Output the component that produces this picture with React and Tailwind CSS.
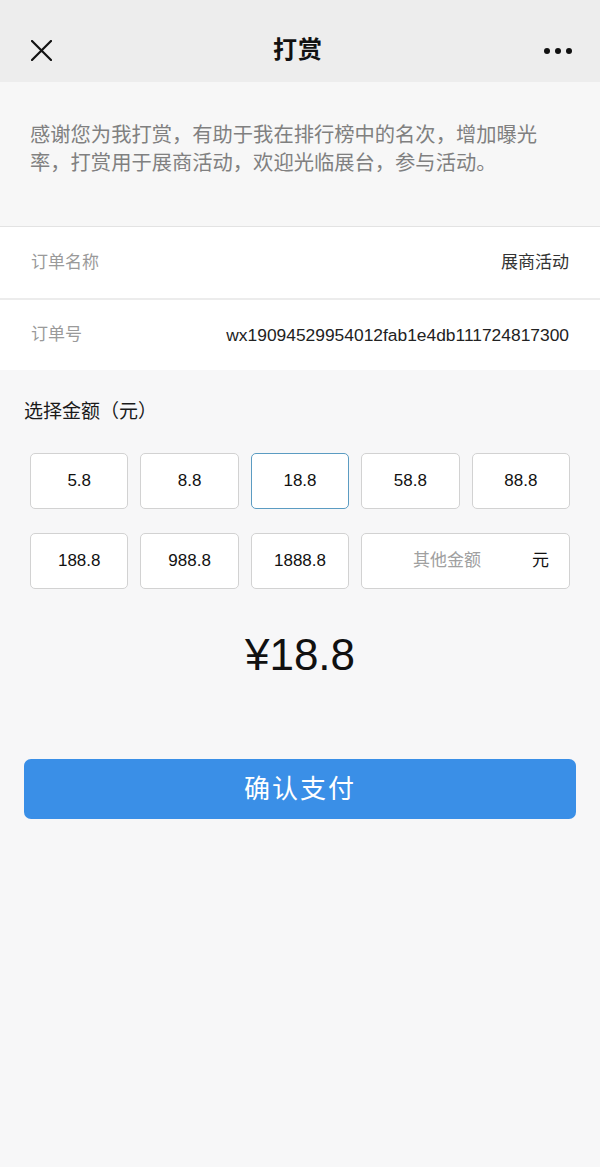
import React from "react";

const amounts1 = ["5.8", "8.8", "18.8", "58.8", "88.8"];
const amounts2 = ["188.8", "988.8", "1888.8"];

function AmountBox({ value, selected }) {
  return (
    <div
      className={`h-[56px] flex items-center justify-center rounded-[5px] bg-white text-[17px] text-[#111] border ${
        selected ? "border-[#5b9cc2]" : "border-[#d2d2d2]"
      }`}
    >
      {value}
    </div>
  );
}

export default function App() {
  return (
    <div
      className="w-[600px] min-h-[1167px] bg-[#f7f7f8] flex flex-col"
      style={{ fontFamily: '"Liberation Sans", "Noto Sans CJK SC", sans-serif' }}
    >
      {/* Header */}
      <div className="h-[82px] bg-[#ededed] flex items-center justify-between px-[31px] pt-[18px] shrink-0">
        <svg width="21" height="21" viewBox="0 0 21 21" className="mt-[1px]">
          <path d="M1 1 L20 20 M20 1 L1 20" stroke="#111" strokeWidth="2.2" strokeLinecap="round" />
        </svg>
        <div className="text-[24px] font-bold text-[#111] tracking-[1px]">打赏</div>
        <div className="flex items-center gap-[5px] -mr-[3px] mt-[2px]">
          <span className="w-[6px] h-[6px] rounded-full bg-[#111]" />
          <span className="w-[6px] h-[6px] rounded-full bg-[#111]" />
          <span className="w-[6px] h-[6px] rounded-full bg-[#111]" />
        </div>
      </div>

      {/* Description */}
      <div className="h-[144px] bg-[#f7f7f7] pl-[30px] pt-[39px] shrink-0">
        <p className="w-[520px] text-[20.3px] leading-[28px] text-[#808080]">
          感谢您为我打赏，有助于我在排行榜中的名次，增加曝光率，打赏用于展商活动，欢迎光临展台，参与活动。
        </p>
      </div>

      {/* Order info */}
      <div className="border-t border-[#e3e3e3] bg-white">
        <div className="h-[71px] flex items-center justify-between px-[31px] text-[17px]">
          <span className="text-[#9a9a9a]">订单名称</span>
          <span className="text-[#333]">展商活动</span>
        </div>
        <div className="h-[2px] bg-[#ececec]" />
        <div className="h-[70px] flex items-center justify-between px-[31px] text-[17px]">
          <span className="text-[#9a9a9a]">订单号</span>
          <span className="text-[#222] text-[17.4px]">wx19094529954012fab1e4db111724817300</span>
        </div>
      </div>

      {/* Amount selection */}
      <div className="pt-[28px]">
        <div className="pl-[24px] text-[19px] leading-[28px] text-[#1a1a1a]">选择金额（元）</div>
        <div className="px-[30px] mt-[27px] grid grid-cols-5 gap-x-[12px] gap-y-[24px]">
          {amounts1.map((a) => (
            <AmountBox key={a} value={a} selected={a === "18.8"} />
          ))}
          {amounts2.map((a) => (
            <AmountBox key={a} value={a} />
          ))}
          <div className="col-span-2 h-[56px] flex items-center rounded-[5px] bg-white border border-[#d2d2d2] text-[17px]">
            <span className="flex-1 text-center text-[#a0a0a0]">其他金额</span>
            <span className="pr-[20px] text-[#111]">元</span>
          </div>
        </div>

        <div className="mt-[40px] text-center text-[44px] leading-[52px] text-[#111]">¥18.8</div>

        <div className="px-[24px] mt-[78px]">
          <div className="h-[60px] rounded-[7px] bg-[#3a8fe7] flex items-center justify-center text-white text-[26px] tracking-[2px]">
            确认支付
          </div>
        </div>
      </div>
    </div>
  );
}
